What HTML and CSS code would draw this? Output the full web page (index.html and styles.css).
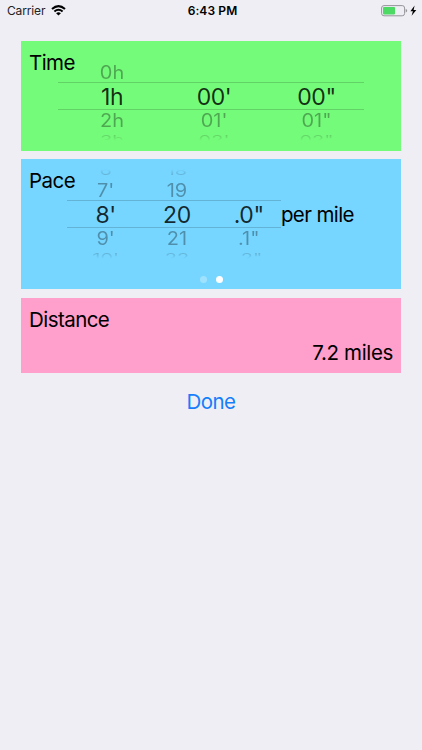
FILE: index.html
```
<!DOCTYPE html>
<html lang="en">
<head>
    <meta charset="UTF-8">
    <meta name="viewport" content="width=device-width, initial-scale=1.0">
    <title>Pace Calculator</title>
    <link rel="stylesheet" href="styles.css">
</head>
<body>
    <div class="status-bar">
        <div class="status-left">
            <span class="carrier">Carrier</span>
            <svg class="wifi" width="15" height="11" viewBox="0 0 15 11">
                <path d="M1 4 Q7.5 -1.6 14 4" fill="none" stroke="#000" stroke-width="2.1"/>
                <path d="M3.4 6.5 Q7.5 3 11.6 6.5" fill="none" stroke="#000" stroke-width="2"/>
                <path d="M5.1 8.2 Q7.5 6.2 9.9 8.2 L7.5 10.6 Z" fill="#000"/>
            </svg>
        </div>
        <span class="clock">6:43 PM</span>
        <div class="status-right">
            <svg width="36" height="12" viewBox="0 0 36 12">
                <rect x="0.6" y="0.6" width="23" height="10.2" rx="2.4" fill="none" stroke="#95959a" stroke-width="1"/>
                <rect x="2" y="2" width="12" height="7.4" rx="0.8" fill="#4cd964"/>
                <path d="M24.7 4 Q26.2 4.3 26.2 5.7 Q26.2 7.1 24.7 7.4 Z" fill="#95959a"/>
                <path d="M33.6 0.6 L29.4 6.3 H31.9 L30.6 10.8 L35.3 4.9 H32.6 Z" fill="#000"/>
            </svg>
        </div>
    </div>

    <div class="cards">
        <div class="card time">
            <h2>Time</h2>
            <div class="picker">
                <div class="wheel">
                    <span class="far top"></span>
                    <span class="near">0h</span>
                    <span class="selected">1h</span>
                    <span class="near">2h</span>
                    <span class="far bottom"><b>3h</b></span>
                </div>
                <div class="wheel">
                    <span class="far top"></span>
                    <span class="near"></span>
                    <span class="selected">00'</span>
                    <span class="near">01'</span>
                    <span class="far bottom"><b>02'</b></span>
                </div>
                <div class="wheel">
                    <span class="far top"></span>
                    <span class="near"></span>
                    <span class="selected">00"</span>
                    <span class="near">01"</span>
                    <span class="far bottom"><b>02"</b></span>
                </div>
            </div>
        </div>

        <div class="card pace">
            <h2>Pace</h2>
            <div class="picker">
                <div class="wheel">
                    <span class="far top"><b>6</b></span>
                    <span class="near">7'</span>
                    <span class="selected">8'</span>
                    <span class="near">9'</span>
                    <span class="far bottom"><b>10'</b></span>
                </div>
                <div class="wheel">
                    <span class="far top"><b>18</b></span>
                    <span class="near">19</span>
                    <span class="selected">20</span>
                    <span class="near">21</span>
                    <span class="far bottom"><b>22</b></span>
                </div>
                <div class="wheel">
                    <span class="far top"></span>
                    <span class="near"></span>
                    <span class="selected">.0"</span>
                    <span class="near">.1"</span>
                    <span class="far bottom"><b>.2"</b></span>
                </div>
                <span class="unit">per mile</span>
            </div>
            <div class="dots">
                <span class="dot"></span>
                <span class="dot active"></span>
            </div>
        </div>

        <div class="card distance">
            <h2>Distance</h2>
            <p class="result">7.2 miles</p>
        </div>
    </div>

    <button class="done" type="button">Done</button>
</body>
</html>
```
FILE: styles.css
```
* {
    box-sizing: border-box;
}
body {
    margin: 0;
    min-height: 750px;
    background: #efeef5;
    font-family: Inter, "Liberation Sans", sans-serif;
    font-size: 20.5px;
    color: #000;
}
.status-bar {
    display: grid;
    grid-template-columns: 1fr auto 1fr;
    align-items: center;
    height: 22px;
    padding: 0 5px 0 7px;
    font-size: 12px;
}
.status-left {
    display: flex;
    align-items: center;
    gap: 6px;
    margin-top: -1px;
}
.carrier {
    color: #222;
    letter-spacing: -0.15px;
}
.clock {
    padding-left: 1px;
    font-weight: 600;
    letter-spacing: 0.1px;
    line-height: 20px;
}
.status-right {
    display: flex;
    justify-content: flex-end;
}
.cards {
    display: flex;
    flex-direction: column;
    gap: 8px;
    padding: 19px 21px 0;
}
.card {
    display: grid;
}
.card h2 {
    grid-area: 1 / 1;
    margin: 9px 0 0 8px;
    font-size: 20.5px;
    font-weight: 400;
    line-height: 26px;
    letter-spacing: -0.55px;
}
.time {
    height: 110px;
    background: #75fb7a;
}
.pace {
    height: 130px;
    grid-template-rows: 1fr auto;
    background: #76d6ff;
}
.distance {
    height: 75.5px;
    margin-top: 0.5px;
    background: #ff9fcb;
}
.picker {
    grid-area: 1 / 1;
    display: flex;
    align-self: start;
    padding: 9px 0 0 37px;
}
.pace .picker {
    padding: 9px 0 0 46px;
}
.wheel {
    display: flex;
    flex-direction: column;
    width: 102px;
    text-align: center;
}
.pace .wheel {
    width: 71.3px;
}
.wheel span {
    display: block;
    flex: none;
    padding-left: 6px;
}
.wheel:nth-child(3) span {
    padding-left: 7px;
}
.wheel .selected {
    height: 28px;
    border-top: 1px solid rgba(0, 0, 0, 0.16);
    border-bottom: 1px solid rgba(0, 0, 0, 0.16);
    font-size: 23px;
    line-height: 28px;
    letter-spacing: -0.4px;
    color: rgba(0, 0, 0, 0.83);
}
.wheel .near {
    height: 20px;
    font-size: 20px;
    line-height: 22px;
    color: rgba(0, 0, 0, 0.33);
    transform: scaleY(0.9);
}
/* outermost rows are squashed and fade out at the wheel's edge */
.wheel .far {
    height: 12px;
    overflow: hidden;
    color: rgba(0, 0, 0, 0.24);
}
.far b {
    display: block;
    font-size: 20px;
    font-weight: 400;
    line-height: 20px;
    transform: scaleY(0.6);
}
.far.bottom {
    -webkit-mask-image: linear-gradient(#000 20%, transparent 90%);
    mask-image: linear-gradient(#000 20%, transparent 90%);
}
.far.top {
    -webkit-mask-image: linear-gradient(transparent 10%, #000 80%);
    mask-image: linear-gradient(transparent 10%, #000 80%);
}
.far.top b {
    margin-top: -7px;
}
.unit {
    align-self: center;
    letter-spacing: -0.6px;
}
.dots {
    display: flex;
    justify-content: center;
    gap: 9px;
    padding-bottom: 6.5px;
}
.dot {
    width: 7px;
    height: 7px;
    border-radius: 50%;
    background: rgba(255, 255, 255, 0.3);
}
.dot.active {
    background: #fff;
}
.result {
    margin: 0;
    padding-right: 8px;
    line-height: 26px;
    text-align: right;
    letter-spacing: -0.35px;
}
.done {
    display: block;
    margin: 16px auto 0;
    padding: 0;
    border: none;
    background: none;
    font: inherit;
    line-height: 26px;
    letter-spacing: -0.5px;
    color: #157efb;
    cursor: pointer;
}
```
